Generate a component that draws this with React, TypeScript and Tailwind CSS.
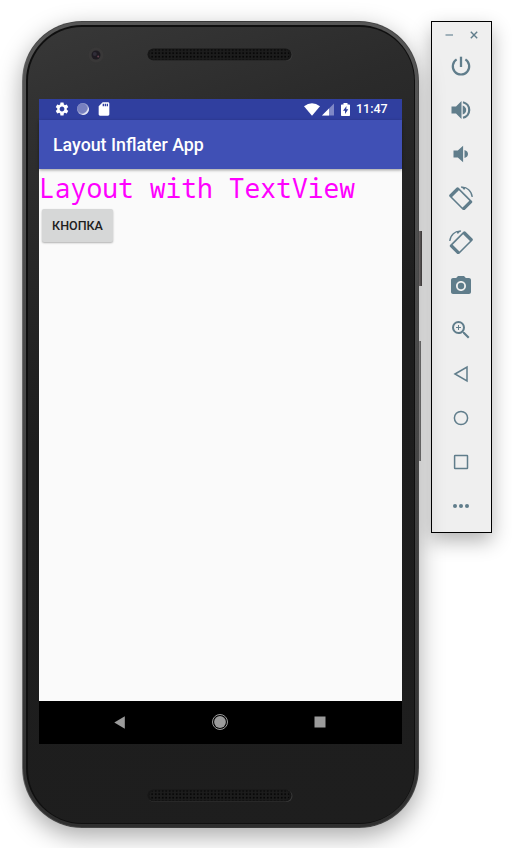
import React from 'react';
import { MdSettings, MdSdCard, MdCameraAlt, MdZoomIn } from 'react-icons/md';

function Speaker() {
  return (
    <svg width="146" height="13" viewBox="0 0 146 13" className="block">
      <defs>
        <pattern id="holes" width="3.5" height="3.5" patternUnits="userSpaceOnUse">
          <rect width="3.5" height="3.5" fill="#1c1c1c" />
          <circle cx="1.7" cy="1.7" r="1" fill="#050505" />
        </pattern>
      </defs>
      <rect x="1" y="1" width="144.5" height="12" rx="6" fill="#3a3a3a" />
      <rect x="0.5" y="0.5" width="144" height="12" rx="6" fill="#161616" />
      <rect x="2.5" y="1.5" width="140" height="10" rx="5" fill="url(#holes)" />
    </svg>
  );
}

function StatusBar() {
  return (
    <div className="flex h-[21px] items-center bg-[#303f9f] pl-[15px] pr-[14px] pb-px text-white">
      <MdSettings size={16} />
      <svg width="14" height="14" viewBox="0 0 14 14" className="ml-[6px]">
        <circle cx="7" cy="7" r="6" fill="#9fa5d0" />
        <circle cx="6.2" cy="6.2" r="5" fill="#7880c0" />
        <path d="M12.6 5a6 6 0 0 1-7.600 7.600q6-.8 7.600-7.600z" fill="#e4e6f5" />
      </svg>
      <MdSdCard size={16} className="ml-[6px]" />
      <div className="grow" />
      <svg width="16" height="13" viewBox="0 0 16 13">
        <path d="M0 3.200Q8-2.800 16 3.200L8 12.800z" fill="white" />
      </svg>
      <svg width="12" height="13" viewBox="0 0 12 13" className="ml-[2px]">
        <path d="M12 0.500V12.500H0z" fill="#7f88c6" />
        <path d="M7 5.500V12.500H0z" fill="white" />
      </svg>
      <svg width="9" height="13" viewBox="0 0 9 13" className="ml-[7px]">
        <path d="M2.500 0h4v1.500h1.700q.8 0 .8.800v9.900q0 .8-.8.800H.8q-.8 0-.8-.8V2.300q0-.8.8-.8h1.700z" fill="white" />
        <path d="M5.500 3L2 7.700h2V11l3.300-4.700h-2z" fill="#303f9f" />
      </svg>
      <span className="ml-[6px] w-[32px] whitespace-nowrap pt-px text-[12.500px] font-medium leading-none">11:47</span>
    </div>
  );
}

function Screen() {
  return (
    <div className="flex h-[645px] w-[363px] flex-col bg-[#fafafa]">
      <StatusBar />
      <div className="z-10 flex h-[49px] items-center bg-[#4050b5] pl-[14px] pt-[2px] text-[17.800px] font-medium text-white shadow-[0_1px_3px_rgba(0,0,0,0.4)]">
        Layout Inflater App
      </div>
      <div className="flex grow flex-col items-start">
        <p className="h-[38px] whitespace-nowrap font-['Noto_Sans_Mono','Droid_Sans_Mono','DejaVu_Sans_Mono',monospace] text-[26.350px] leading-[38px] text-[#ff00ff]">
          Layout with TextView
        </p>
        <button className="ml-[3px] mt-[2px] h-[33px] w-[71px] rounded-[2px] bg-[#d6d7d7] pt-[2px] text-[12.500px] font-medium text-[#202020] shadow-[0_1px_2px_rgba(0,0,0,0.3)]">
          КНОПКА
        </button>
      </div>
      <div className="flex h-[43px] items-center bg-black pl-[75px] pb-px">
        <svg width="11" height="13" viewBox="0 0 11 13">
          <path d="M0.300 6.500L10.800 0.300V12.700z" fill="#9b9b9b" />
        </svg>
        <svg width="18" height="18" viewBox="0 0 18 18" className="ml-[86px]">
          <circle cx="9" cy="9" r="7.500" fill="none" stroke="#9b9b9b" />
          <circle cx="9" cy="9" r="5.900" fill="#9b9b9b" />
        </svg>
        <svg width="12" height="12" viewBox="0 0 12 12" className="ml-[85px]">
          <rect x="0.500" y="0.500" width="11" height="11" fill="#9b9b9b" />
        </svg>
      </div>
    </div>
  );
}

function Phone() {
  return (
    <div className="relative h-[807px] w-[397px] shrink-0 rounded-[60px] bg-[linear-gradient(to_right,#6e6e6e_0%,#4a4a4a_2%,#353535_50%,#484848_100%)] p-px shadow-[0_8px_24px_rgba(0,0,0,0.34)]">
      <div className="h-full rounded-[59px] bg-[linear-gradient(to_bottom,#565656,#484848_50%,#2e2e2e)] p-[3px]">
        <div className="h-full rounded-[56px] bg-[#0f0f0f] p-[1.500px]">
          <div className="flex h-full flex-col items-start rounded-[54px] bg-[linear-gradient(160deg,#383838_0%,#2b2b2b_18%,#1d1d1d_45%,#1e1e1e_100%)] pl-[11.500px] pt-[21.500px]">
            <div className="relative mb-[38px] ml-[108px] h-[13px] w-[146px]">
              <Speaker />
              <svg width="16" height="16" viewBox="0 0 16 16" className="absolute -left-[59px] -top-px">
                <circle cx="8" cy="8" r="7.500" fill="#393838" />
                <circle cx="8" cy="8" r="4.500" fill="#1e1b22" />
                <circle cx="6.800" cy="7" r="2" fill="#302d38" />
                <circle cx="10.200" cy="9.500" r="1" fill="#65434f" />
              </svg>
            </div>
            <Screen />
            <div className="ml-[108px] mt-[45px]">
              <Speaker />
            </div>
          </div>
        </div>
      </div>
      <div className="absolute -right-[3px] top-[210px] h-[55px] w-[3px] bg-linear-to-r from-[#706b6b] to-[#373434]" />
      <div className="absolute -right-[2px] top-[320px] h-[120px] w-[2px] bg-linear-to-r from-[#8a8888] to-[#555555]" />
    </div>
  );
}

function Rotate({ flipped = false }: { flipped?: boolean }) {
  return (
    <svg width="24" height="24" viewBox="0 0 24 24" className={flipped ? '-scale-x-100' : ''}>
      <g transform="rotate(45 11.700 12.800)">
        <rect x="0.900" y="6.400" width="21.600" height="12.800" rx="1.600" fill="currentColor" />
        <rect x="4.300" y="8" width="14.800" height="9.600" fill="#efefef" />
      </g>
      <path d="M12 1.200C18 .4 22.800 5.300 23.200 11" fill="none" stroke="currentColor" strokeWidth="1.300" />
      <path d="M12 .8L15.200 4 16.800 1.600z" fill="currentColor" />
    </svg>
  );
}

function Toolbar() {
  const icons = [
    <svg width="24" height="24" viewBox="0 0 24 24">
      <path d="M12 2.700v10.300" fill="none" stroke="currentColor" strokeWidth="2.300" />
      <path d="M7.600 5.400a8.200 8.200 0 1 0 8.800 0" fill="none" stroke="currentColor" strokeWidth="2.200" />
    </svg>,
    <svg width="24" height="24" viewBox="0 0 24 24">
      <path d="M2.500 8.500h4.500l5.500-5.500v18l-5.500-5.500H2.500z" fill="currentColor" />
      <path d="M13.700 7.500q3.500 1.500 3.500 4.500t-3.500 4.500z" fill="currentColor" />
      <path d="M14 4.200a8 8 0 0 1 0 15.600" fill="none" stroke="currentColor" strokeWidth="2.200" />
    </svg>,
    <svg width="24" height="24" viewBox="0 0 24 24">
      <path d="M4.500 8.500h4.300l5.300-4.800v16.600l-5.300-4.800H4.500z" fill="currentColor" />
      <path d="M15.500 8q3.500 1.200 3.500 4t-3.500 4z" fill="currentColor" />
    </svg>,
    <Rotate />,
    <Rotate flipped />,
    <MdCameraAlt size={24} />,
    <MdZoomIn size={24} />,
    <svg width="24" height="24" viewBox="0 0 24 24">
      <path d="M6 12L18 5v14z" fill="none" stroke="currentColor" strokeWidth="1.500" />
    </svg>,
    <svg width="24" height="24" viewBox="0 0 24 24">
      <circle cx="12" cy="12" r="6.600" fill="none" stroke="currentColor" strokeWidth="1.500" />
    </svg>,
    <svg width="24" height="24" viewBox="0 0 24 24">
      <rect x="5.600" y="5.600" width="12.900" height="12.900" rx=".5" fill="none" stroke="currentColor" strokeWidth="1.500" />
    </svg>,
    <svg width="24" height="24" viewBox="0 0 24 24">
      <circle cx="6" cy="12" r="2" fill="currentColor" />
      <circle cx="12" cy="12" r="2" fill="currentColor" />
      <circle cx="18" cy="12" r="2" fill="currentColor" />
    </svg>,
  ];
  return (
    <div className="ml-[12px] flex h-[512px] w-[61px] shrink-0 flex-col border border-black bg-[#efefef] text-[#607d8b] shadow-[0_8px_20px_rgba(0,0,0,0.3)]">
      <div className="flex h-[22px] w-full items-center pl-[13px] pt-[4px]">
        <svg width="34" height="10" viewBox="0 0 34 10">
          <path d="M0.500 5H8" stroke="#a0b1ba" strokeWidth="2" />
          <path d="M25.800 1.800l6.400 6.400M32.200 1.800l-6.400 6.400" stroke="currentColor" strokeWidth="1.400" />
        </svg>
      </div>
      {icons.map((icon, i) => (
        <div key={i} className="flex h-[44px] w-[58px] shrink-0 items-center justify-center">
          {icon}
        </div>
      ))}
    </div>
  );
}

export default function App() {
  return (
    <div className="flex h-[848px] w-[512px] items-start overflow-hidden bg-white pl-[22px] pt-[21px] font-[Roboto,sans-serif]">
      <Phone />
      <Toolbar />
    </div>
  );
}
